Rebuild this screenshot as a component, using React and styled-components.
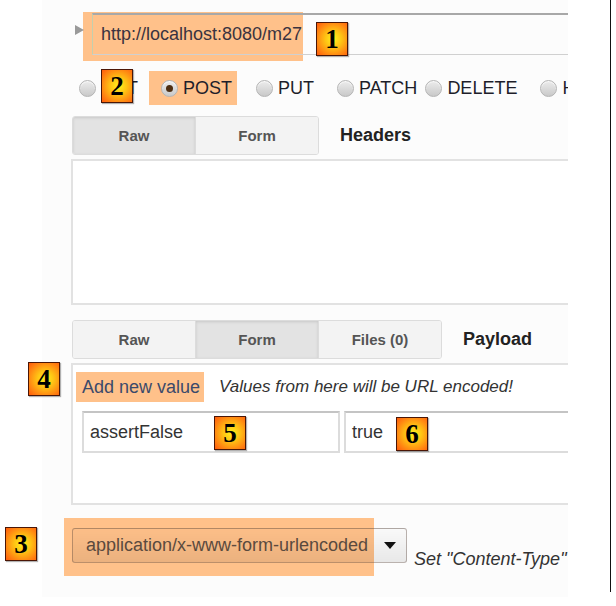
import styled, { createGlobalStyle } from 'styled-components'

const Global = createGlobalStyle`
  html, body { margin: 0; padding: 0; background: #fff; }
  body { font-family: "Liberation Sans", Arial, sans-serif; color: #333; }
`

const methods = [
  { name: 'GET', gap: 0 },
  { name: 'POST', gap: 11, checked: true, marked: true },
  { name: 'PUT', gap: 19 },
  { name: 'PATCH', gap: 23 },
  { name: 'DELETE', gap: 8 },
  { name: 'HEAD', gap: 23 },
]

const badges = [
  { n: 1, x: 316, y: 22 },
  { n: 2, x: 101, y: 69 },
  { n: 4, x: 28, y: 362 },
  { n: 5, x: 214, y: 416 },
  { n: 6, x: 396, y: 417 },
  { n: 3, x: 5, y: 527 },
]

const App = () => {
  return (
    <>
      <Global />
      <Frame>
        <Panel>
          <UrlRow>
            <Highlight $left={41} $top={-1} $width={220} $height={49} />
            <Disclosure />
            <UrlInput>http://localhost:8080/m27</UrlInput>
          </UrlRow>

          <MethodRow>
            {methods.map(m => (
              <MethodOption key={m.name} $gap={m.gap} $marked={m.marked}>
                <RadioDot $checked={m.checked} />
                <MethodLabel>{m.name}</MethodLabel>
              </MethodOption>
            ))}
          </MethodRow>

          <TabRow>
            <TabGroup>
              <Tab $active>Raw</Tab>
              <Tab>Form</Tab>
            </TabGroup>
            <TabCaption>Headers</TabCaption>
          </TabRow>
          <Box $height={146} />

          <TabRow $space={15}>
            <TabGroup>
              <Tab>Raw</Tab>
              <Tab $active>Form</Tab>
              <Tab>Files (0)</Tab>
            </TabGroup>
            <TabCaption>Payload</TabCaption>
          </TabRow>
          <Box $height={142}>
            <PayloadHead>
              <AddLink>Add new value</AddLink>
              <Hint>Values from here will be URL encoded!</Hint>
            </PayloadHead>
            <FieldRow>
              <Field $width={258}>assertFalse</Field>
              <Field $width={260}>true</Field>
            </FieldRow>
          </Box>

          <SelectRow>
            <Highlight $left={22} $top={0} $width={310} $height={58} />
            <Select>
              <span>application/x-www-form-urlencoded</span>
              <SelectArrow />
            </Select>
            <Hint $low>Set "Content-Type" header</Hint>
          </SelectRow>
        </Panel>
        <EdgeLine />

        {badges.map(b => (
          <Badge key={b.n} $x={b.x} $y={b.y}>{b.n}</Badge>
        ))}
      </Frame>
    </>
  )
}

export default App

const Frame = styled.div`
  position: relative;
  width: 616px;
  height: 606px;
  display: flex;
  align-items: flex-start;
  overflow: hidden;
`

const Panel = styled.div`
  margin-left: 42px;
  width: 526px;
  height: 597px;
  background: #fcfcfc;
  overflow: hidden;
  display: flex;
  flex-direction: column;
`

const EdgeLine = styled.div`
  margin-left: 42px;
  width: 1px;
  height: 592px;
  background: #111;
`

const Highlight = styled.div`
  position: absolute;
  left: ${p => p.$left}px;
  top: ${p => p.$top}px;
  width: ${p => p.$width}px;
  height: ${p => p.$height}px;
  background: #ffc18a;
  z-index: 0;
`

const UrlRow = styled.div`
  position: relative;
  margin-top: 13px;
  height: 42px;
  display: flex;
  align-items: center;
  padding-left: 33px;
`

const Disclosure = styled.div`
  position: relative;
  z-index: 1;
  width: 0;
  height: 0;
  border-top: 5px solid transparent;
  border-bottom: 5px solid transparent;
  border-left: 9px solid #9a9a9a;
  margin-right: 8px;
  align-self: flex-start;
  margin-top: 12px;
`

const UrlInput = styled.div`
  position: relative;
  z-index: 1;
  flex: 0 0 520px;
  height: 42px;
  box-sizing: border-box;
  border: 1px solid #d0d0d0;
  border-top: 2px solid #a8a8a8;
  border-left-color: #c3cfae;
  padding-left: 8px;
  display: flex;
  align-items: center;
  font-size: 18px;
  color: #3a3340;
`

const MethodRow = styled.div`
  margin-top: 16px;
  height: 34px;
  display: flex;
  align-items: center;
  padding-left: 37px;
  white-space: nowrap;
`

const MethodOption = styled.div`
  display: flex;
  align-items: center;
  flex-shrink: 0;
  height: 34px;
  margin-left: ${p => p.$gap}px;
  padding: ${p => (p.$marked ? '0 5px 0 12px' : '0')};
  background: ${p => (p.$marked ? '#ffc18a' : 'transparent')};
`

const RadioDot = styled.span`
  position: relative;
  width: 15px;
  height: 15px;
  border-radius: 50%;
  border: 1px solid #b4b4b4;
  background: linear-gradient(#ececec, #c9c9c9);
  box-shadow: inset 0 1px 1px rgba(255, 255, 255, 0.8);
  margin-right: 5px;
  &::after {
    content: '';
    display: ${p => (p.$checked ? 'block' : 'none')};
    position: absolute;
    left: 4px;
    top: 4px;
    width: 7px;
    height: 7px;
    border-radius: 50%;
    background: #4d2e12;
  }
`

const MethodLabel = styled.span`
  font-size: 18px;
  color: #1e1e2a;
`

const TabRow = styled.div`
  margin-top: ${p => p.$space || 11}px;
  padding-left: 30px;
  display: flex;
  align-items: center;
`

const TabGroup = styled.div`
  display: flex;
  border: 1px solid #dcdcdc;
  border-radius: 3px;
  overflow: hidden;
`

const Tab = styled.div`
  width: 122px;
  height: 37px;
  display: flex;
  align-items: center;
  justify-content: center;
  font-size: 15px;
  font-weight: bold;
  color: #555;
  background: ${p => (p.$active ? '#e3e3e3' : '#f3f3f3')};
  box-shadow: ${p => (p.$active ? 'inset 0 1px 3px rgba(0,0,0,0.12)' : 'none')};
  & + & {
    border-left: 1px solid #dcdcdc;
  }
`

const TabCaption = styled.div`
  margin-left: 21px;
  font-size: 18px;
  font-weight: bold;
  color: #222;
`

const Box = styled.div`
  margin-top: 4px;
  margin-left: 29px;
  width: 540px;
  height: ${p => p.$height}px;
  box-sizing: border-box;
  border: 2px solid #e2e2e2;
  background: #fff;
  flex-shrink: 0;
`

const PayloadHead = styled.div`
  margin-top: 7px;
  padding-left: 3px;
  display: flex;
  align-items: center;
  height: 30px;
  white-space: nowrap;
`

const AddLink = styled.span`
  height: 30px;
  line-height: 30px;
  padding: 0 4px 0 6px;
  background: #ffc18a;
  font-size: 18px;
  color: #3b4a6b;
`

const Hint = styled.span`
  margin-left: ${p => (p.$low ? 7 : 15)}px;
  margin-top: ${p => (p.$low ? 24 : 0)}px;
  font-size: ${p => (p.$low ? 18 : 17)}px;
  font-style: italic;
  color: #333;
  white-space: nowrap;
`

const FieldRow = styled.div`
  margin-top: 9px;
  padding-left: 9px;
  display: flex;
  gap: 4px;
`

const Field = styled.div`
  flex: 0 0 ${p => p.$width}px;
  height: 42px;
  box-sizing: border-box;
  border: 2px solid #dcdcdc;
  border-top-color: #c4c4c4;
  padding-left: 6px;
  display: flex;
  align-items: center;
  font-size: 18px;
  color: #333;
`

const SelectRow = styled.div`
  position: relative;
  margin-top: 13px;
  height: 58px;
  padding-left: 30px;
  display: flex;
  align-items: center;
  flex-shrink: 0;
`

const Select = styled.div`
  position: relative;
  z-index: 1;
  width: 335px;
  height: 35px;
  box-sizing: border-box;
  margin-top: -3px;
  border: 1px solid rgba(90, 70, 60, 0.4);
  border-radius: 3px;
  background: linear-gradient(rgba(0, 0, 0, 0.01), rgba(0, 0, 0, 0.08));
  display: flex;
  align-items: center;
  justify-content: space-between;
  padding: 0 10px 0 13px;
  font-size: 18px;
  color: #5a4a3e;
  flex-shrink: 0;
`

const SelectArrow = styled.span`
  width: 0;
  height: 0;
  border-left: 6px solid transparent;
  border-right: 6px solid transparent;
  border-top: 7px solid #111;
`

const Badge = styled.div`
  position: absolute;
  left: ${p => p.$x}px;
  top: ${p => p.$y}px;
  width: 32px;
  height: 34px;
  box-sizing: border-box;
  border: 1px solid #4a1606;
  background: radial-gradient(circle at 55% 50%, #fff21e 0%, #ffc414 35%, #ff8a12 70%, #ff5a0c 100%);
  box-shadow: 1px 1px 1px rgba(0, 0, 0, 0.3);
  display: flex;
  align-items: center;
  justify-content: center;
  font-family: "Liberation Serif", "Times New Roman", serif;
  font-weight: bold;
  font-size: 27px;
  color: #000;
  z-index: 5;
`
